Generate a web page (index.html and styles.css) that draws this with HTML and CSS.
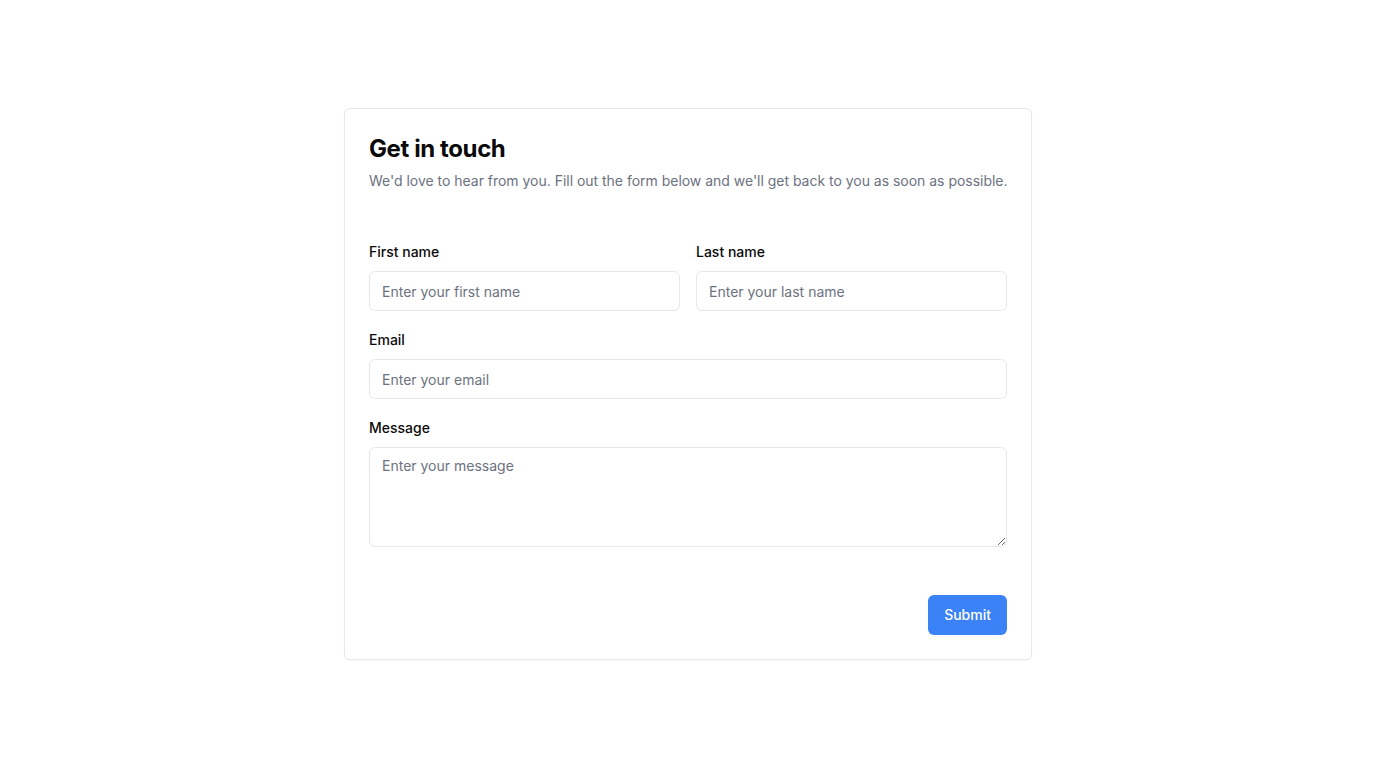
FILE: index.html
```html
<!DOCTYPE html>
<html lang="en">
<head>
<meta charset="utf-8">
<title>Get in touch</title>
<link rel="stylesheet" href="styles.css">
</head>
<body>
<main class="page">
  <form class="card">
    <header class="card-header">
      <h1 class="title">Get in touch</h1>
      <p class="subtitle">We'd love to hear from you. Fill out the form below and we'll get back to you as soon as possible.</p>
    </header>
    <div class="fields">
      <div class="row">
        <div class="field">
          <label class="label" for="first">First name</label>
          <input class="input" id="first" type="text" placeholder="Enter your first name">
        </div>
        <div class="field">
          <label class="label" for="last">Last name</label>
          <input class="input" id="last" type="text" placeholder="Enter your last name">
        </div>
      </div>
      <div class="field">
        <label class="label" for="email">Email</label>
        <input class="input" id="email" type="email" placeholder="Enter your email">
      </div>
      <div class="field">
        <label class="label" for="message">Message</label>
        <textarea class="input textarea" id="message" placeholder="Enter your message"></textarea>
      </div>
    </div>
    <div class="actions">
      <button class="button" type="button">Submit</button>
    </div>
  </form>
</main>
</body>
</html>
```
FILE: styles.css
```css
* { box-sizing: border-box; }
html, body { margin: 0; padding: 0; }
body {
  background: #ffffff;
  font-family: Inter, "Noto Sans", sans-serif;
  color: #0a0a0a;
}
.page {
  min-height: 768px;
  display: flex;
  align-items: center;
  justify-content: center;
}
.card {
  width: 688px;
  border: 1px solid #e5e7eb;
  border-radius: 6px;
  padding: 24px;
  background: #fff;
  box-shadow: 0 1px 2px rgba(0,0,0,0.04);
}
.card-header { margin-bottom: 48px; }
.title {
  margin: 0;
  font-size: 24px;
  line-height: 32px;
  font-weight: 700;
  letter-spacing: -0.4px;
  color: #0a0a0a;
}
.subtitle {
  margin: 6px 0 0;
  font-size: 14px;
  line-height: 20px;
  color: #6b7280;
  white-space: nowrap;
  letter-spacing: -0.02px;
}
.fields {
  display: flex;
  flex-direction: column;
  gap: 16px;
}
.row {
  display: grid;
  grid-template-columns: 1fr 1fr;
  gap: 16px;
}
.field {
  display: flex;
  flex-direction: column;
  gap: 8px;
}
.label {
  font-size: 14px;
  line-height: 22px;
  padding-top: 2px;
  font-weight: 500;
  color: #0a0a0a;
}
.input {
  height: 40px;
  width: 100%;
  border: 1px solid #e5e7eb;
  border-radius: 6px;
  padding: 8px 12px;
  font-family: inherit;
  font-size: 14px;
  line-height: 20px;
  color: #0a0a0a;
  background: #fff;
  outline: none;
}
.input::placeholder { color: #6b7280; opacity: 1; }
.textarea {
  height: 100px;
  resize: vertical;
  display: block;
}
.actions {
  display: flex;
  justify-content: flex-end;
  margin-top: 48px;
}
.button {
  height: 40px;
  padding: 0 16px 2px;
  border: none;
  border-radius: 6px;
  background: #3b82f6;
  color: #fff;
  font-family: inherit;
  font-size: 14px;
  font-weight: 500;
  cursor: pointer;
}
```
